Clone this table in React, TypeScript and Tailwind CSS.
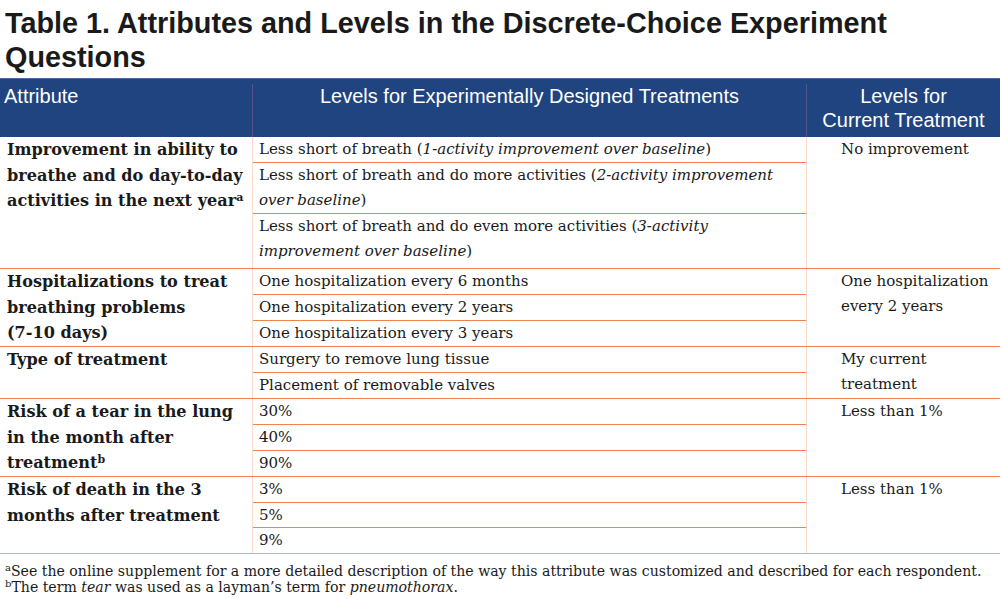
import React from 'react'

type Level = { content: React.ReactNode; className?: string }

interface Group {
  attribute: React.ReactNode
  levels: Level[]
  current: React.ReactNode
}

// superscript that doesn't push the line box open
const Sup = ({ children, className = '' }: { children: React.ReactNode; className?: string }) => (
  <span className={`relative leading-none ${className}`}>{children}</span>
)

const groups: Group[] = [
  {
    attribute: (
      <>
        Improvement in ability to breathe and do day-to-day activities in the next year
        <Sup className="-top-[5px] text-[11px]">a</Sup>
      </>
    ),
    levels: [
      { content: <>Less short of breath (<i>1-activity improvement over baseline</i>)</> },
      { content: <>Less short of breath and do more activities (<i>2-activity improvement over baseline</i>)</> },
      {
        content: <>Less short of breath and do even more activities (<i>3-activity improvement over baseline</i>)</>,
        className: 'pb-[4px]',
      },
    ],
    current: 'No improvement',
  },
  {
    attribute: (
      <>
        Hospitalizations to treat breathing problems <span className="whitespace-nowrap">(7-10 days)</span>
      </>
    ),
    levels: [
      { content: 'One hospitalization every 6 months' },
      { content: 'One hospitalization every 2 years' },
      { content: 'One hospitalization every 3 years' },
    ],
    current: 'One hospitalization every 2 years',
  },
  {
    attribute: 'Type of treatment',
    levels: [{ content: 'Surgery to remove lung tissue' }, { content: 'Placement of removable valves' }],
    current: 'My current treatment',
  },
  {
    attribute: (
      <>
        Risk of a tear in the lung in the month after treatment<Sup className="-top-[5px] text-[11px]">b</Sup>
      </>
    ),
    levels: [{ content: '30%' }, { content: '40%' }, { content: '90%' }],
    current: 'Less than 1%',
  },
  {
    attribute: 'Risk of death in the 3 months after treatment',
    levels: [
      { content: '3%', className: 'leading-[24.5px]' },
      { content: '5%', className: 'leading-[24.5px]' },
      { content: '9%', className: 'leading-[24.5px]' },
    ],
    current: 'Less than 1%',
  },
]

const serif = 'font-["DejaVu_Serif",serif]'

export default function App() {
  return (
    <div className="w-[1000px] h-[599px] bg-white overflow-hidden text-[#1a1a1a]">
      {/* Title */}
      <h1 className="px-[5px] pt-[6px] h-[78px] font-['Liberation_Sans',Arial,sans-serif] font-bold text-[28.8px] leading-[34px] text-[#1a1a1a]">
        Table 1. Attributes and Levels in the Discrete-Choice Experiment Questions
      </h1>

      {/* Header */}
      <div className="flex h-[59px] bg-[#1f4480] border-t border-[#4d6ca3] text-white font-['Liberation_Sans',Arial,sans-serif] text-[20px] leading-[24px]">
        <div className="w-[252px] pl-[4px] pt-[5px]">Attribute</div>
        <div className="w-[554px] mt-[5px] border-l border-[#54548c] text-center">
          Levels for Experimentally Designed Treatments
        </div>
        <div className="flex-1 mt-[5px] border-l border-[#54548c] text-center">
          Levels for
          <br />
          Current Treatment
        </div>
      </div>

      {/* Body */}
      <div className={`${serif} text-[15px] leading-[25px]`}>
        {groups.map((g, i) => (
          <div
            key={i}
            className={`flex ${i < groups.length - 1 ? 'border-b border-[#f0824f]' : 'border-b border-[#a9b8d0]'}`}
          >
            <div className="w-[252px] pl-[7px] pr-[4px] text-[16.1px] leading-[25.5px] font-bold">{g.attribute}</div>
            <div className="w-[554px] border-l border-[#fcd9c6]">
              {g.levels.map((lv, j) => (
                <div
                  key={j}
                  className={`pl-[6px] pr-[12px] ${j < g.levels.length - 1 ? 'border-b border-[#f0824f]' : ''} ${lv.className ?? ''}`}
                >
                  {lv.content}
                </div>
              ))}
            </div>
            <div className="flex-1 border-l border-[#fcd9c6] pl-[34px] pr-[4px]">{g.current}</div>
          </div>
        ))}
      </div>

      {/* Footnotes */}
      <div className={`${serif} pl-[5px] pt-[9px] text-[14.1px] leading-[16px]`}>
        <p>
          <Sup className="-top-[5px] text-[10px]">a</Sup>See the online supplement for a more detailed description of
          the way this attribute was customized and described for each respondent.
        </p>
        <p>
          <Sup className="-top-[5px] text-[10px]">b</Sup>The term <i>tear</i> was used as a layman&rsquo;s term for{' '}
          <i>pneumothorax</i>.
        </p>
      </div>
    </div>
  )
}
